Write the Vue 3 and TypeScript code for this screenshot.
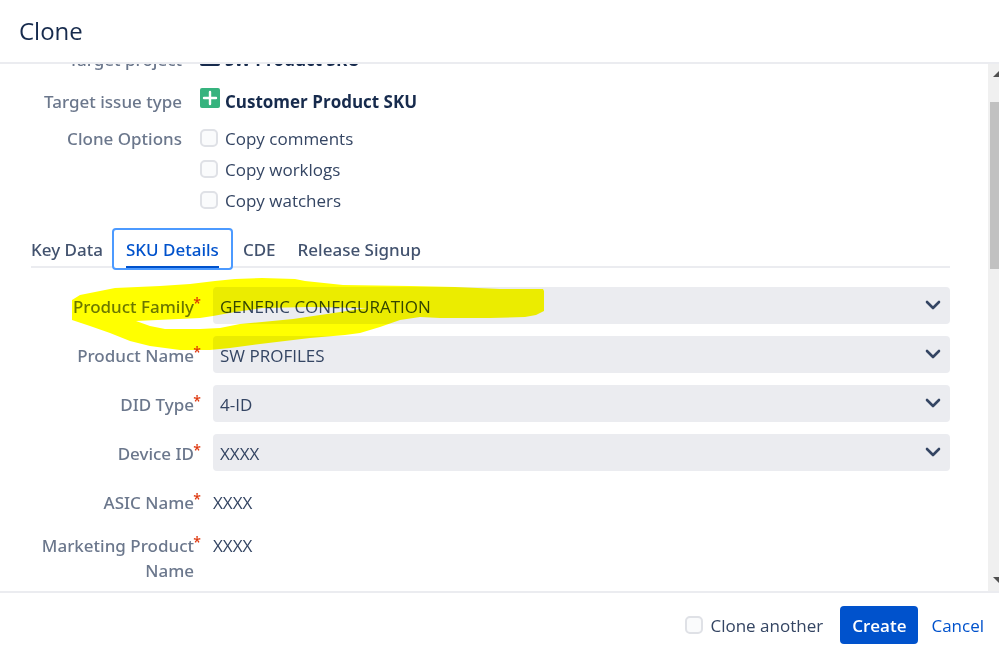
<script setup lang="ts">
import { reactive, ref } from 'vue'

interface Option { id: string; label: string; checked: boolean }
interface SelectField { id: string; label: string; value: string }

const options = reactive<Option[]>([
  { id: 'comments', label: 'Copy comments', checked: false },
  { id: 'worklogs', label: 'Copy worklogs', checked: false },
  { id: 'watchers', label: 'Copy watchers', checked: false },
])
const tabs = ['Key Data', 'SKU Details', 'CDE', 'Release Signup']
const activeTab = ref('SKU Details')
const selects = reactive<SelectField[]>([
  { id: 'family', label: 'Product Family', value: 'GENERIC CONFIGURATION' },
  { id: 'product', label: 'Product Name', value: 'SW PROFILES' },
  { id: 'did', label: 'DID Type', value: '4-ID' },
  { id: 'device', label: 'Device ID', value: 'XXXX' },
])
const readonlyFields = [
  { label: 'ASIC Name', value: 'XXXX' },
  { label: 'Marketing Product Name', value: 'XXXX' },
]
const cloneAnother = ref(false)
</script>

<template>
  <section class="dialog">
    <header class="header"><h1>Clone</h1></header>
    <div class="body">
      <form class="form" @submit.prevent>
        <div class="row meta">
          <span class="label">Target project</span>
          <svg class="type-icon" viewBox="0 0 20 20"><rect width="20" height="20" rx="2" fill="#172b4d" /><path d="M4 14h12" stroke="#fff" stroke-width="2" /></svg>
          <strong>SW Product SKU</strong>
        </div>
        <div class="row meta">
          <span class="label">Target issue type</span>
          <svg class="type-icon" viewBox="0 0 20 20"><rect width="20" height="20" rx="2" fill="#36b37e" /><path d="M10 4v12M4 10h12" stroke="#fff" stroke-width="2.4" stroke-linecap="round" /></svg>
          <strong>Customer Product SKU</strong>
        </div>
        <div class="row options">
          <span class="label">Clone Options</span>
          <div class="checks">
            <label v-for="o in options" :key="o.id" class="check">
              <input v-model="o.checked" type="checkbox" />{{ o.label }}
            </label>
          </div>
        </div>
        <div class="tabs" role="tablist">
          <button
            v-for="t in tabs" :key="t" type="button" role="tab" class="tab"
            :class="{ active: t === activeTab }" :aria-selected="t === activeTab" @click="activeTab = t"
          ><span>{{ t }}</span></button>
        </div>
        <div class="fields">
          <div v-for="f in selects" :key="f.id" class="field">
            <label class="field-label" :for="f.id">{{ f.label }}<sup>*</sup></label>
            <div class="select-wrap">
              <select :id="f.id" v-model="f.value"><option>{{ f.value }}</option></select>
              <svg class="chevron" viewBox="0 0 16 10"><path d="M2 2l6 6 6-6" /></svg>
            </div>
          </div>
          <div v-for="f in readonlyFields" :key="f.label" class="field plain">
            <span class="field-label">{{ f.label }}<sup>*</sup></span>
            <span class="value">{{ f.value }}</span>
          </div>
          <svg class="marker" viewBox="70 275 480 80" aria-hidden="true">
            <path fill-rule="evenodd" d="M72 299L80 294L100 290L115 287L160 285L190 283L215 280L235 278L262 277L295 278L305 280L343 284L410 285L455 286L500 288L543 288L544 290V310L536 314L525 316L490 317L440 317L420 316L400 319L380 326L360 332L345 334L310 337L260 343L230 347L210 349L180 349L150 345L130 340L110 332L90 325L72 319ZM136 320L200 317L213 315L235 311L262 307L310 306L367 307L327 313L293 318L262 321L240 323L220 327L200 328L165 328L150 325Z" />
          </svg>
        </div>
      </form>
      <div class="scrollbar" aria-hidden="true">
        <svg viewBox="0 0 11 8"><path d="M5 6L11 0V6Z" /></svg>
        <span class="thumb"></span>
        <svg viewBox="0 0 11 8"><path d="M5 1H11V7Z" /></svg>
      </div>
    </div>
    <footer class="footer">
      <label class="check"><input v-model="cloneAnother" type="checkbox" />Clone another</label>
      <button type="button" class="create">Create</button>
      <a href="#" class="cancel">Cancel</a>
    </footer>
  </section>
</template>

<style>
body { margin: 0; background: #fff; }
</style>

<style scoped>
* { box-sizing: border-box; }
.dialog {
  display: flex; flex-direction: column; height: 100vh; color: #344563;
  font: 17px/24px "Open Sans", "Noto Sans", sans-serif;
}
.header { flex: none; height: 64px; padding: 15px 19px; border-bottom: 2px solid #ebecf0; }
h1 { margin: 0; font-size: 24px; line-height: 32px; font-weight: 400; color: #172b4d; }
.body { flex: 1; min-height: 0; display: flex; overflow: hidden; }
.form { flex: 1; min-width: 0; margin-top: -18px; padding: 0 38px 0 31px; }
.row { display: flex; align-items: flex-start; }
.meta { height: 42px; }
.meta .label, strong { padding-top: 2px; }
.label, .field-label, .tab { font-family: "Noto Sans", "Open Sans", sans-serif; font-weight: 500; }
.label { width: 151px; margin-right: 18px; text-align: right; color: #6b778c; flex: none; }
.type-icon { width: 20px; height: 20px; margin-right: 5px; }
strong { font-weight: 700; color: #172b4d; }
.options { margin-top: -3px; }
.checks { display: flex; flex-direction: column; gap: 7px; }
.check { display: flex; align-items: flex-start; gap: 7px; }
.check input {
  appearance: none; width: 18px; height: 18px; margin: 2px 0 0; border: 2px solid #dfe1e6;
  border-radius: 5px; background: #fafbfc;
}
.check input:checked { background: #0052cc; border-color: #0052cc; }
.tabs { display: flex; height: 42px; margin-top: 15px; background: linear-gradient(#ebecf0, #ebecf0) 0 38px / 100% 2px no-repeat; }
.tab {
  padding: 0 12px 0 10px; border: 0; background: none; font-size: 17px; color: #42526e;
  height: 40px;
}
.tab:first-child { padding: 0 9px 0 0; }
.tab span { display: block; height: 40px; line-height: 44px; }
.tab.active { height: 42px; padding: 0 12px; border: 2px solid #4c9aff; border-radius: 4px; color: #0052cc; background: #fff; }
.tab.active span { height: 38px; line-height: 40px; border-bottom: 2px solid #0052cc; }
.fields { position: relative; padding-top: 17px; }
.field { display: flex; margin-bottom: 12px; }
.field-label { position: relative; width: 163px; margin-right: 19px; padding-top: 7px; text-align: right; color: #6b778c; line-height: 25px; flex: none; }
sup { position: absolute; right: -7px; top: 6px; font-size: 14px; line-height: 20px; color: #de350b; }
.select-wrap { position: relative; flex: 1; }
select {
  appearance: none; display: block; width: 100%; height: 37px; padding: 2px 40px 0 7px; border: 0;
  border-radius: 4px; background: #ebecf0; color: #344563; font: inherit;
}
.chevron { position: absolute; right: 9px; top: 13px; width: 16px; height: 10px; pointer-events: none; fill: none; stroke: #344563; stroke-width: 2.6; stroke-linecap: round; stroke-linejoin: round; }
.plain { margin-bottom: 11px; }
.value { padding-top: 7px; line-height: 25px; }
.marker { position: absolute; left: 39px; top: 6px; width: 480px; height: 80px; fill: #ff0; mix-blend-mode: multiply; pointer-events: none; }
.scrollbar { flex: none; width: 11px; display: flex; flex-direction: column; background: #f0f0f0; padding: 7px 0; }
.scrollbar svg { width: 11px; height: 8px; fill: #505050; }
.thumb { height: 167px; margin: 23px 0 auto 2px; background: #c1c1c1; }
.footer {
  flex: none; display: flex; align-items: center; justify-content: flex-end; height: 56px;
  padding: 10px 15px 0 0; border-top: 2px solid #ebecf0;
}
.footer .check, .cancel { padding-top: 2px; }
.create { height: 38px; margin: 0 13px 0 17px; padding: 2px 12px 0; border: 0; border-radius: 4px; background: #0052cc; color: #fff; font: inherit; font-weight: 600; }
.cancel { color: #0052cc; text-decoration: none; }
</style>
